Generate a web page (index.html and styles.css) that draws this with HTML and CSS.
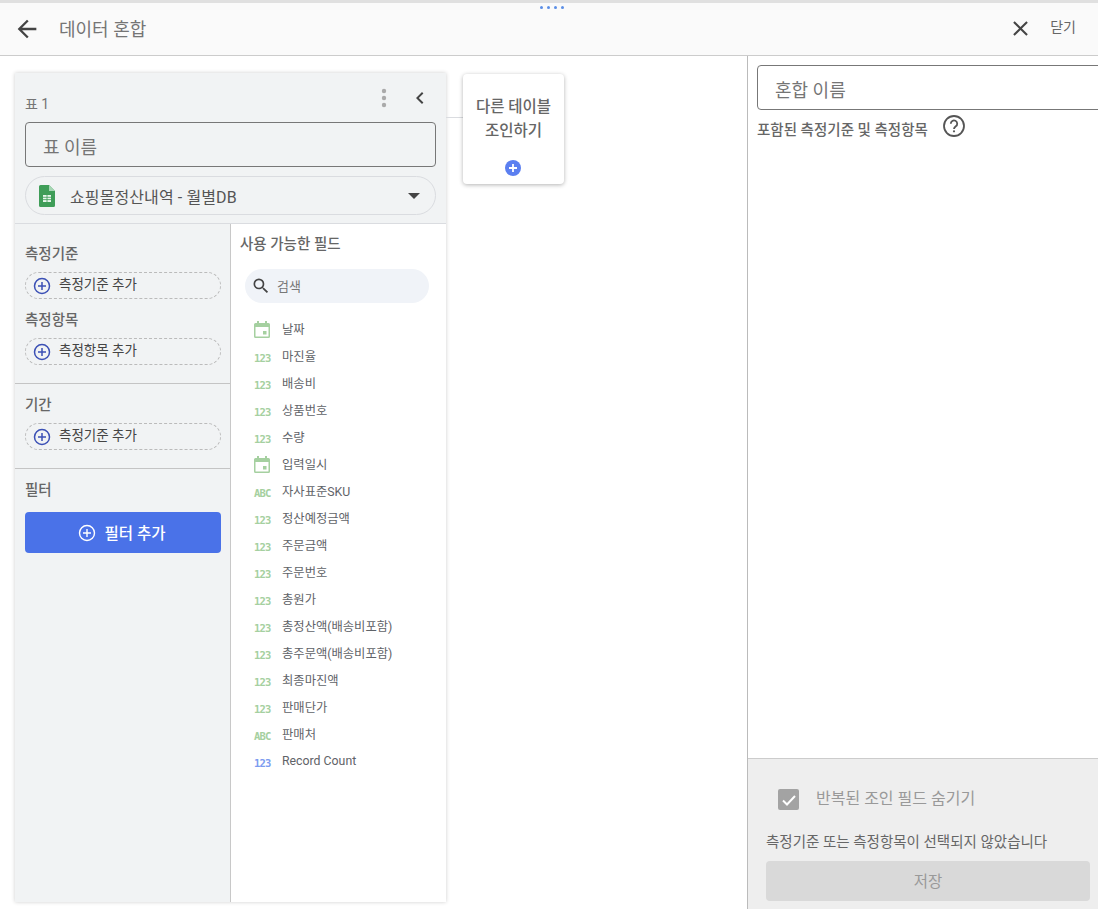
FILE: index.html
```html
<!DOCTYPE html>
<html lang="ko">
<head>
    <meta charset="UTF-8">
    <title>데이터 혼합</title>
    <link rel="stylesheet" href="styles.css">
</head>
<body>

<div class="top-strip"></div>

<!-- Header -->
<header class="header">
    <div class="drag-dots"><i></i><i></i><i></i><i></i></div>
    <svg class="back-icon" width="28" height="28" viewBox="0 0 24 24"><path d="M20 11H7.8l5.6-5.600L12 4l-8 8 8 8 1.400-1.400L7.800 13H20z" fill="#444"/></svg>
    <span class="header-title">데이터 혼합</span>
    <svg class="close-icon" width="25" height="25" viewBox="0 0 24 24"><path d="M19 6.400 17.600 5 12 10.600 6.400 5 5 6.400 10.600 12 5 17.600 6.400 19 12 13.400 17.600 19 19 17.600 13.400 12z" fill="#444"/></svg>
    <span class="close-label">닫기</span>
</header>

<div class="main">

    <!-- Canvas -->
    <div class="canvas">
        <div class="table-card">
            <div class="card-top">
                <div class="card-title-row">
                    <span class="card-title">표 1</span>
                    <svg class="more-icon" width="6" height="20" viewBox="0 0 6 20"><circle cx="3" cy="3" r="2.200" fill="#aaa"/><circle cx="3" cy="10" r="2.200" fill="#aaa"/><circle cx="3" cy="17" r="2.200" fill="#aaa"/></svg>
                    <svg class="collapse-icon" width="24" height="24" viewBox="0 0 24 24"><path d="M15.400 7.400 14 6l-6 6 6 6 1.400-1.400-4.600-4.600z" fill="#444"/></svg>
                </div>
                <div class="name-box">표 이름</div>
                <div class="source-select">
                    <svg width="16" height="22" viewBox="0 0 16 22"><path d="M1.500 0H10l6 6v14.500a1.500 1.500 0 0 1-1.500 1.500h-13A1.500 1.500 0 0 1 0 20.500v-19A1.500 1.500 0 0 1 1.500 0z" fill="#3f9d58"/><path d="M10 0l6 6h-6z" fill="#a5d6b3"/><path d="M4 10h8v7H4z" fill="#e8f5ec"/><path d="M4 12.300h8M4 14.600h8M8 10v7" stroke="#3f9d58" stroke-width=".8"/></svg>
                    <span class="source-name">쇼핑몰정산내역 - 월별DB</span>
                    <span class="caret"></span>
                </div>
            </div>

            <div class="card-body">
                <div class="config-col">
                    <section class="config-section">
                        <h4>측정기준</h4>
                        <div class="add-chip">
                            <svg class="plus-icon" width="18" height="18" viewBox="0 0 18 18"><circle cx="9" cy="9" r="7.500" fill="none" stroke="#3b50b5" stroke-width="1.500"/><path d="M9 5v8M5 9h8" stroke="#3b50b5" stroke-width="1.500"/></svg>
                            <span>측정기준 추가</span>
                        </div>
                        <h4 class="second-title">측정항목</h4>
                        <div class="add-chip">
                            <svg class="plus-icon" width="18" height="18" viewBox="0 0 18 18"><circle cx="9" cy="9" r="7.500" fill="none" stroke="#3b50b5" stroke-width="1.500"/><path d="M9 5v8M5 9h8" stroke="#3b50b5" stroke-width="1.500"/></svg>
                            <span>측정항목 추가</span>
                        </div>
                    </section>
                    <section class="config-section period">
                        <h4>기간</h4>
                        <div class="add-chip">
                            <svg class="plus-icon" width="18" height="18" viewBox="0 0 18 18"><circle cx="9" cy="9" r="7.500" fill="none" stroke="#3b50b5" stroke-width="1.500"/><path d="M9 5v8M5 9h8" stroke="#3b50b5" stroke-width="1.500"/></svg>
                            <span>측정기준 추가</span>
                        </div>
                    </section>
                    <section class="config-section filter">
                        <h4>필터</h4>
                        <div class="filter-btn">
                            <svg width="18" height="18" viewBox="0 0 18 18"><circle cx="9" cy="9" r="7.500" fill="none" stroke="#fff" stroke-width="1.400"/><path d="M9 5v8M5 9h8" stroke="#fff" stroke-width="1.400"/></svg>
                            <span>필터 추가</span>
                        </div>
                    </section>
                </div>

                <div class="fields-col">
                    <h4 class="fields-title">사용 가능한 필드</h4>
                    <div class="search-box">
                        <svg width="20" height="20" viewBox="0 0 24 24"><path d="M15.500 14h-.79l-.28-.27A6.470 6.470 0 0 0 16 9.500 6.500 6.500 0 1 0 9.500 16c1.610 0 3.090-.59 4.230-1.570l.27.28v.79l5 4.990L20.490 19l-4.990-5zm-6 0C7.010 14 5 11.990 5 9.500S7.010 5 9.500 5 14 7.010 14 9.500 11.990 14 9.500 14z" fill="#444"/></svg>
                        <span>검색</span>
                    </div>
                    <ul class="field-list">
                        <li><svg class="type-cal" width="16" height="17" viewBox="0 0 16 17"><path d="M3 0h2v2h6V0h2v2h1.500A1.500 1.500 0 0 1 16 3.500v12a1.500 1.500 0 0 1-1.500 1.500h-13A1.500 1.500 0 0 1 0 15.500v-12A1.500 1.500 0 0 1 1.500 2H3zM1.500 6v9.500h13V6zM9 10h3.500v3.500H9z" fill="#a5d0a0"/></svg><span>날짜</span></li>
                        <li><b class="type">123</b><span>마진율</span></li>
                        <li><b class="type">123</b><span>배송비</span></li>
                        <li><b class="type">123</b><span>상품번호</span></li>
                        <li><b class="type">123</b><span>수량</span></li>
                        <li><svg class="type-cal" width="16" height="17" viewBox="0 0 16 17"><path d="M3 0h2v2h6V0h2v2h1.500A1.500 1.500 0 0 1 16 3.500v12a1.500 1.500 0 0 1-1.500 1.500h-13A1.500 1.500 0 0 1 0 15.500v-12A1.500 1.500 0 0 1 1.500 2H3zM1.500 6v9.500h13V6zM9 10h3.500v3.500H9z" fill="#a5d0a0"/></svg><span>입력일시</span></li>
                        <li><b class="type">ABC</b><span>자사표준SKU</span></li>
                        <li><b class="type">123</b><span>정산예정금액</span></li>
                        <li><b class="type">123</b><span>주문금액</span></li>
                        <li><b class="type">123</b><span>주문번호</span></li>
                        <li><b class="type">123</b><span>총원가</span></li>
                        <li><b class="type">123</b><span>총정산액(배송비포함)</span></li>
                        <li><b class="type">123</b><span>총주문액(배송비포함)</span></li>
                        <li><b class="type">123</b><span>최종마진액</span></li>
                        <li><b class="type">123</b><span>판매단가</span></li>
                        <li><b class="type">ABC</b><span>판매처</span></li>
                        <li><b class="type type-blue">123</b><span>Record Count</span></li>
                    </ul>
                </div>
            </div>
        </div>

        <div class="connector"></div>

        <div class="join-card">
            <div class="join-text">다른 테이블<br>조인하기</div>
            <svg width="16" height="16" viewBox="0 0 16 16"><circle cx="8" cy="8" r="8" fill="#5b7ff0"/><path d="M8 4v8M4 8h8" stroke="#fff" stroke-width="1.800"/></svg>
        </div>
    </div>

    <!-- Right panel -->
    <aside class="side-panel">
        <div class="side-top">
            <div class="blend-name">혼합 이름</div>
            <div class="included-row">
                <span>포함된 측정기준 및 측정항목</span>
                <svg width="24" height="24" viewBox="0 0 24 24"><circle cx="12" cy="12" r="10" fill="none" stroke="#555" stroke-width="1.800"/><path d="M8.800 9.700a3.200 3.200 0 1 1 5 2.600c-1 .8-1.800 1.300-1.800 2.700" fill="none" stroke="#555" stroke-width="1.800"/><circle cx="12" cy="17.300" r="1.100" fill="#555"/></svg>
            </div>
        </div>
        <div class="side-bottom">
            <div class="check-row">
                <span class="check-box"><svg width="22" height="22" viewBox="0 0 22 22"><path d="M5 11.500l4 4 8-8.500" fill="none" stroke="#fff" stroke-width="2"/></svg></span>
                <span class="check-label">반복된 조인 필드 숨기기</span>
            </div>
            <div class="warn-text">측정기준 또는 측정항목이 선택되지 않았습니다</div>
            <div class="save-btn">저장</div>
        </div>
    </aside>
</div>

</body>
</html>
```

FILE: styles.css
```css
html, body {
    margin: 0;
    padding: 0;
    height: 909px;
    overflow: hidden;
}

body {
    font-family: 'Roboto', 'Noto Sans CJK KR', sans-serif;
    color: #5f6368;
    background-color: white;
}

h4 {
    margin: 0;
}

.top-strip {
    height: 3px;
    background-color: #e0e0e0;
}

/* Header */
.header {
    position: relative;
    display: flex;
    align-items: center;
    height: 53px;
    box-sizing: border-box;
    background-color: #fafafa;
    border-bottom: 1px solid #ccc;
    padding: 0 22px 0 13px;
}

.drag-dots {
    position: absolute;
    left: 540px;
    top: 3px;
    display: flex;
    gap: 4px;
}

.drag-dots i {
    width: 3px;
    height: 3px;
    border-radius: 50%;
    background-color: #5b8ee6;
}

.header-title {
    margin-left: 18px;
    margin-bottom: 2px;
    font-size: 18px;
    color: #757575;
}

.close-icon {
    margin-left: auto;
    margin-bottom: 1px;
}

.close-label {
    margin-left: 17px;
    margin-bottom: 6px;
    font-size: 14px;
    color: #666;
}

.main {
    display: flex;
    height: 853px;
}

/* Canvas */
.canvas {
    display: flex;
    align-items: flex-start;
    width: 747px;
    box-sizing: border-box;
    padding: 17px 0 0 15px;
}

.table-card {
    width: 431px;
    height: 829px;
    display: flex;
    flex-direction: column;
    background-color: #f1f3f4;
    box-shadow: 0 0 4px rgba(0, 0, 0, 0.2);
}

.card-top {
    padding: 0 10px;
    height: 151px;
    box-sizing: border-box;
    border-bottom: 1px solid #dadce0;
}

.card-title-row {
    display: flex;
    align-items: center;
    height: 49px;
}

.card-title {
    margin-top: 11px;
    font-size: 14px;
    color: #757575;
}

.more-icon {
    margin-left: auto;
    margin-top: 1px;
}

.collapse-icon {
    margin-left: 21px;
    margin-right: 4px;
}

.name-box {
    height: 45px;
    box-sizing: border-box;
    border: 1px solid #777;
    border-radius: 4px;
    padding-left: 17px;
    line-height: 49px;
    font-size: 18px;
    color: #757575;
}

.source-select {
    display: flex;
    align-items: center;
    height: 39px;
    box-sizing: border-box;
    margin-top: 9px;
    padding: 0 15px 0 13px;
    border: 1px solid #dadce0;
    border-radius: 20px;
}

.source-name {
    margin-left: 15px;
    font-size: 16px;
    letter-spacing: 0.1px;
    color: #555;
}

.caret {
    margin-left: auto;
    border-top: 6px solid #444;
    border-left: 6px solid transparent;
    border-right: 6px solid transparent;
}

.card-body {
    flex: 1;
    display: flex;
}

.config-col {
    width: 216px;
    box-sizing: border-box;
    border-right: 1px solid #c8c8c8;
}

.config-section {
    padding: 20px 9px 0 10px;
}

.config-section h4 {
    font-size: 14.500px;
    font-weight: 500;
    line-height: 21px;
    color: #666;
}

.config-section .second-title {
    margin-top: 11px;
}

.add-chip {
    display: flex;
    align-items: center;
    height: 27px;
    box-sizing: border-box;
    margin-top: 7px;
    padding-left: 7px;
    border: 1px dashed #bbb;
    border-radius: 14px;
    font-size: 13.500px;
    color: #444;
}

.add-chip span {
    margin-left: 8px;
    margin-bottom: 5px;
}

.config-section.period {
    margin-top: 18px;
    padding-top: 11px;
}

.config-section.period,
.config-section.filter {
    border-top: 1px solid #c4c4c4;
}

.config-section.filter {
    margin-top: 18px;
    padding-top: 11px;
}

.filter-btn {
    display: flex;
    align-items: center;
    justify-content: center;
    height: 41px;
    margin-top: 11px;
    padding-right: 3px;
    background-color: #4a72e8;
    border-radius: 4px;
    color: white;
    font-size: 15.500px;
    font-weight: 500;
}

.filter-btn span {
    margin-left: 9px;
    margin-bottom: 2px;
}

.fields-col {
    flex: 1;
    background-color: white;
    padding: 0 9px;
}

.fields-title {
    margin-top: 11px;
    font-size: 14.500px;
    font-weight: 500;
    line-height: 20px;
    color: #666;
}

.search-box {
    display: flex;
    align-items: center;
    width: 184px;
    height: 34px;
    margin: 14px 0 0 5px;
    padding-left: 6px;
    box-sizing: border-box;
    background-color: #f0f3f8;
    border-radius: 17px;
    font-size: 13px;
    color: #777;
}

.search-box span {
    margin-left: 6px;
    margin-bottom: 2px;
}

.field-list {
    list-style: none;
    margin: 13px 0 0 0;
    padding: 0;
}

.field-list li {
    display: flex;
    align-items: center;
    height: 27px;
    padding-left: 14px;
    font-size: 12.300px;
    color: #5f6368;
}

.field-list li span {
    margin-bottom: 2px;
}

.type-cal {
    width: 16px;
    margin-right: 12px;
    flex-shrink: 0;
}

.type {
    width: 16px;
    margin-right: 12px;
    margin-top: 2px;
    flex-shrink: 0;
    font-family: 'DejaVu Sans Mono', monospace;
    font-size: 10.500px;
    font-weight: bold;
    letter-spacing: -0.800px;
    color: #a5d0a0;
}

.type-blue {
    color: #7c9cf0;
}

.connector {
    width: 17px;
    height: 1px;
    margin-top: 44px;
    background-color: #dadce0;
}

.join-card {
    display: flex;
    flex-direction: column;
    align-items: center;
    width: 101px;
    height: 110px;
    margin-top: 1px;
    background-color: white;
    border-radius: 4px;
    box-shadow: 0 1px 4px rgba(0, 0, 0, 0.3);
}

.join-text {
    margin-top: 21px;
    text-align: center;
    font-size: 15.500px;
    font-weight: 500;
    line-height: 24px;
    color: #666;
}

.join-card svg {
    margin-top: 17px;
    margin-right: 2px;
}

/* Right panel */
.side-panel {
    flex: 1;
    display: flex;
    flex-direction: column;
    border-left: 1px solid #bbb;
}

.side-top {
    flex: 1;
    padding: 9px 0 0 9px;
}

.blend-name {
    height: 45px;
    box-sizing: border-box;
    margin-right: -4px;
    padding-left: 17px;
    line-height: 49px;
    border: 1px solid #777;
    border-radius: 4px;
    font-size: 18px;
    color: #757575;
}

.included-row {
    display: flex;
    align-items: center;
    margin-top: 5px;
    font-size: 14.500px;
    font-weight: 500;
    color: #666;
}

.included-row span {
    margin-top: 3px;
}

.included-row svg {
    margin-left: 14px;
    margin-top: -2px;
}

.side-bottom {
    height: 151px;
    box-sizing: border-box;
    padding: 0 8px 0 18px;
    background-color: #eeeeee;
    border-top: 1px solid #ccc;
}

.check-row {
    display: flex;
    align-items: center;
    height: 21px;
    margin: 30px 0 0 12px;
    font-size: 16px;
    color: #999;
}

.check-label {
    margin-bottom: 6px;
}

.check-box {
    width: 21px;
    height: 21px;
    margin-right: 17px;
    background-color: #a3a3a3;
    border-radius: 2px;
}

.check-box svg {
    display: block;
}

.warn-text {
    margin-top: 23px;
    font-size: 14.500px;
    line-height: 19px;
    color: #666;
}

.save-btn {
    height: 40px;
    margin-top: 9px;
    line-height: 42px;
    text-align: center;
    background-color: #d9d9d9;
    border-radius: 4px;
    font-size: 15.500px;
    color: #999;
}
```
